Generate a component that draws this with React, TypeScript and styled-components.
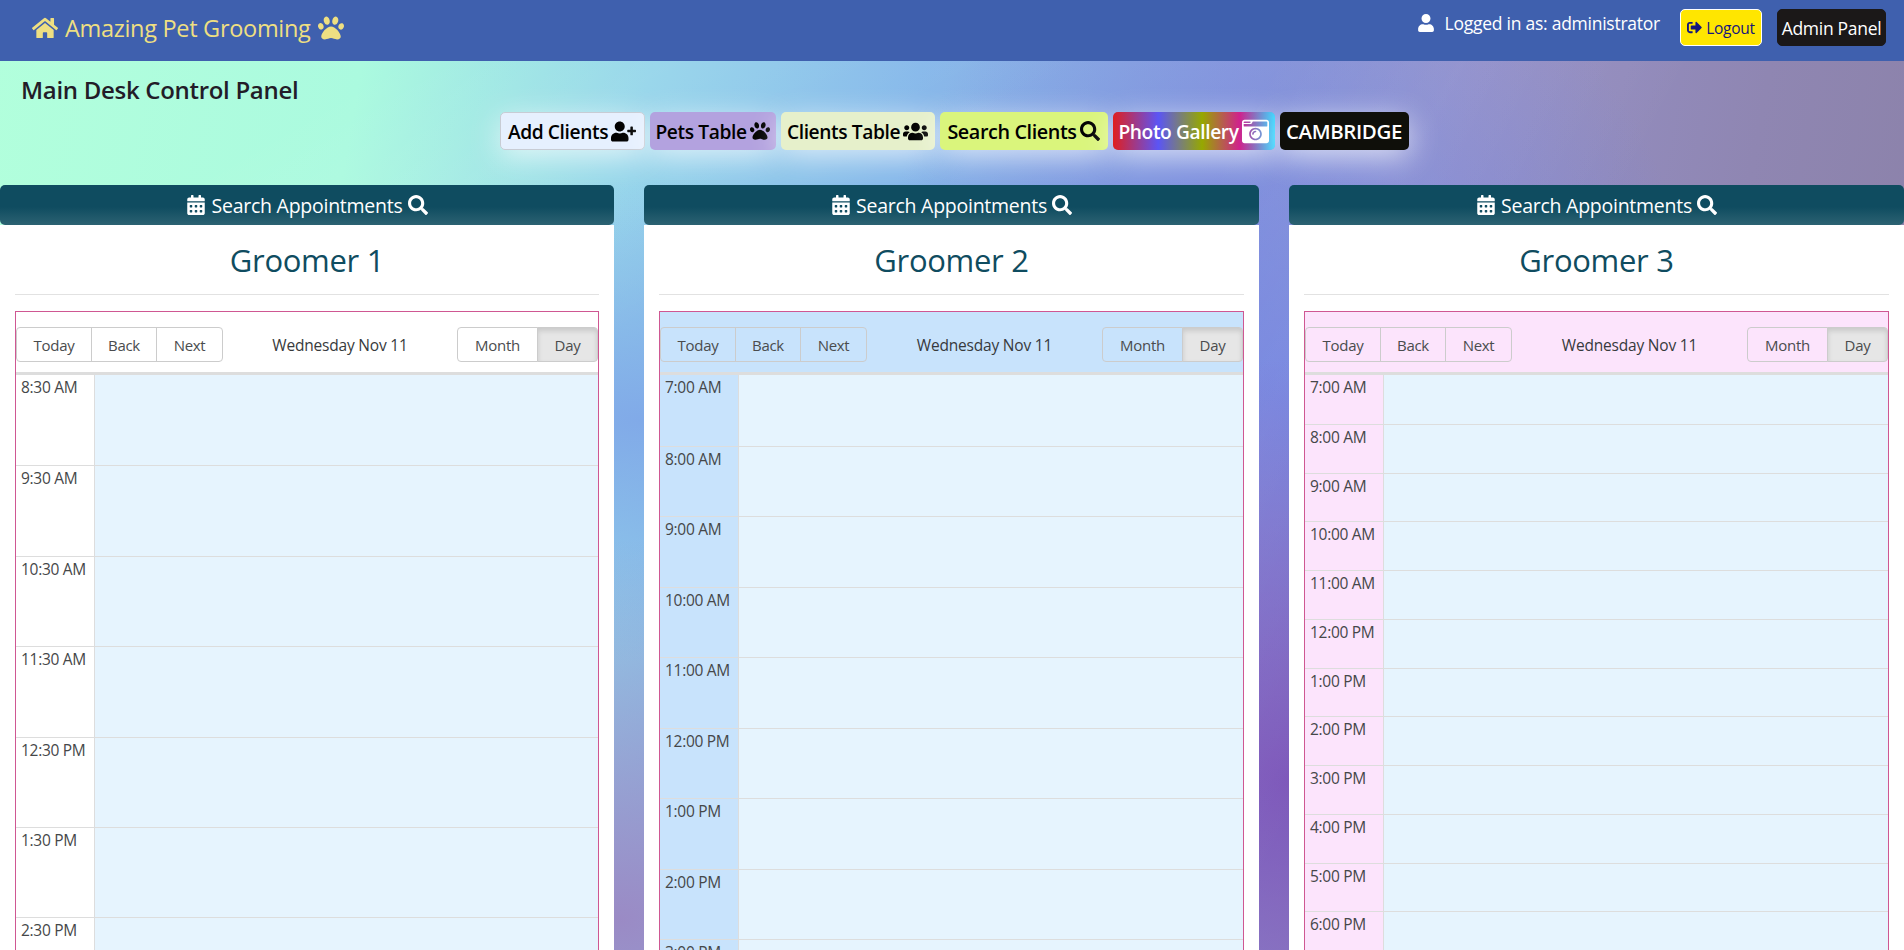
import React from 'react';
import styled, { createGlobalStyle } from 'styled-components';
import {
  FaCalendarAlt,
  FaCameraRetro,
  FaHome,
  FaPaw,
  FaSearch,
  FaSignOutAlt,
  FaUser,
  FaUserPlus,
  FaUsers,
} from 'react-icons/fa';

const GlobalStyle = createGlobalStyle`
  * {
    box-sizing: border-box;
  }

  html,
  body {
    margin: 0;
    height: 950px;
    overflow: hidden;
  }

  body {
    font-family: 'Open Sans', 'Liberation Sans', sans-serif;
    color: #373a3c;
  }
`;

const Page = styled.div`
  height: 950px;
  overflow: hidden;
  background:
    linear-gradient(118deg, rgba(255, 255, 255, 0) 54%, rgba(255, 255, 255, 0.06) 62%, rgba(255, 255, 255, 0) 72%),
    linear-gradient(150deg, rgba(255, 255, 255, 0) 14%, rgba(255, 255, 255, 0.07) 22%, rgba(255, 255, 255, 0) 34%),
    radial-gradient(ellipse 500px 420px at 1290px 780px, rgba(125, 85, 185, 0.95), rgba(125, 85, 185, 0) 100%),
    radial-gradient(ellipse 430px 500px at 1280px 400px, rgba(112, 130, 225, 0.9), rgba(112, 130, 225, 0) 100%),
    radial-gradient(ellipse 520px 380px at 620px 920px, rgba(155, 135, 195, 0.95), rgba(155, 135, 195, 0) 100%),
    radial-gradient(ellipse 500px 240px at 640px 420px, rgba(128, 168, 232, 0.95), rgba(128, 168, 232, 0) 100%),
    linear-gradient(100deg, #b2ffdc 0%, #abfadf 18%, #93d4ea 32%, #86b8ea 45%, #8e9fdc 60%, #9590c6 72%, #8f86b2 86%, #8a80a6 100%);
`;

const Navbar = styled.nav`
  height: 61px;
  background-color: #3f60ae;
  display: flex;
  align-items: flex-start;
  justify-content: space-between;
  padding: 9px 18px 0 32px;
`;

const Brand = styled.a`
  display: flex;
  align-items: center;
  gap: 7px;
  height: 37px;
  color: #eedf82;
  font-size: 23.5px;
  letter-spacing: -0.3px;
`;

const NavRight = styled.div`
  display: flex;
  align-items: flex-start;
`;

const LoggedIn = styled.span`
  display: flex;
  align-items: center;
  gap: 10px;
  height: 28px;
  color: #fff;
  font-size: 17.5px;
  letter-spacing: -0.25px;
  margin-right: 20px;
`;

const NavButton = styled.button<{ $variant: 'logout' | 'admin' }>`
  display: flex;
  align-items: center;
  justify-content: center;
  gap: 4px;
  height: 37px;
  padding: 0;
  font-family: inherit;
  border-radius: 5px;
  width: ${({ $variant }) => ($variant === 'logout' ? 82 : 109)}px;
  margin-left: ${({ $variant }) => ($variant === 'admin' ? 15 : 0)}px;
  font-size: ${({ $variant }) => ($variant === 'logout' ? 15.5 : 17.5)}px;
  letter-spacing: -0.3px;
  color: ${({ $variant }) => ($variant === 'logout' ? '#15157e' : '#fff')};
  background-color: ${({ $variant }) => ($variant === 'logout' ? '#ffe600' : '#1b1818')};
  border: 1px solid ${({ $variant }) => ($variant === 'logout' ? '#fff' : '#1b1818')};
`;

const ControlArea = styled.section`
  height: 124px;
  padding-top: 13px;
`;

const PanelHeading = styled.h1`
  margin: 0 0 7px 21px;
  font-size: 24px;
  line-height: 31px;
  font-weight: 600;
  color: #231c28;
  letter-spacing: -0.3px;
`;

const ActionRow = styled.div`
  display: flex;
  justify-content: center;
  gap: 5px;
  padding-left: 4px;
`;

const ActionButton = styled.button<{ $bg: string; $light?: boolean; $width: number; $border?: boolean; $size?: number }>`
  display: flex;
  align-items: center;
  justify-content: center;
  gap: 3px;
  height: 38px;
  width: ${({ $width }) => $width}px;
  padding: 0;
  border: 1px solid ${({ $border }) => ($border ? '#c8ccd4' : 'transparent')};
  border-radius: 5px;
  font-family: inherit;
  font-size: ${({ $size }) => $size ?? 19.2}px;
  font-weight: 600;
  letter-spacing: -0.4px;
  white-space: nowrap;
  color: ${({ $light }) => ($light ? '#fff' : '#000')};
  background: ${({ $bg }) => $bg};
  background-origin: border-box;
  box-shadow: 0 7px 30px rgba(255, 255, 255, 0.7);

  svg {
    flex: none;
  }
`;

const Columns = styled.div`
  display: grid;
  grid-template-columns: 614px 615px 615px;
  gap: 30px;
`;

const SearchBar = styled.div`
  height: 40px;
  border-radius: 5px;
  display: flex;
  align-items: center;
  justify-content: center;
  gap: 5px;
  color: #fff;
  font-size: 19.5px;
  letter-spacing: -0.25px;
  background: linear-gradient(to bottom, #0f4c60 0%, #0f4c60 55%, #2c6272 100%);

  svg {
    font-size: 20px;
  }
`;

const PanelBody = styled.div`
  background-color: #fff;
  padding: 0 15px;
  height: 730px;
`;

const GroomerTitle = styled.h3`
  margin: 0;
  height: 69px;
  display: flex;
  align-items: center;
  justify-content: center;
  color: #0f4c60;
  font-size: 31px;
  font-weight: 500;
  letter-spacing: -0.3px;
`;

const Divider = styled.hr`
  margin: 0 0 16px;
  border: 0;
  border-top: 1px solid #e2e2e2;
`;

const Calendar = styled.div<{ $bg: string }>`
  border: 1px solid #cf5792;
  background-color: ${({ $bg }) => $bg};
  padding-top: 15px;
  height: 700px;
  overflow: hidden;
`;

const Toolbar = styled.div`
  display: flex;
  align-items: center;
  justify-content: space-between;
  height: 35px;
  margin-bottom: 10px;
`;

const ButtonGroup = styled.div`
  display: flex;
`;

const ToolButton = styled.button<{ $width: number; $active?: boolean }>`
  width: ${({ $width }) => $width}px;
  height: 35px;
  padding: 0;
  font-family: inherit;
  font-size: 15px;
  letter-spacing: -0.3px;
  color: #4a4c4e;
  background-color: ${({ $active }) => ($active ? '#e6e6e6' : 'transparent')};
  border: 1px solid #ccc;
  margin-left: -1px;
  box-shadow: ${({ $active }) => ($active ? 'inset 0 3px 5px rgba(0, 0, 0, 0.125)' : 'none')};

  &:first-child {
    margin-left: 0;
    border-radius: 4px 0 0 4px;
  }

  &:last-child {
    border-radius: 0 4px 4px 0;
  }
`;

const ToolLabel = styled.span`
  font-size: 15.5px;
  letter-spacing: -0.2px;
  color: #373a3c;
`;

const TimeGrid = styled.div`
  border-top: 3px solid #ddd;
`;

const TimeRow = styled.div<{ $height: number }>`
  display: flex;
  height: ${({ $height }) => $height}px;
  border-top: 1px solid #ddd;

  &:first-child {
    border-top: 0;
  }
`;

const TimeLabel = styled.div`
  width: 79px;
  flex: none;
  padding: 2px 0 0 5px;
  font-size: 15.5px;
  line-height: 20px;
  letter-spacing: -0.3px;
  white-space: nowrap;
  color: #454749;
  border-right: 1px solid #ddd;
`;

const Slot = styled.div`
  flex: 1;
  background-color: #e6f4fe;
`;

const groomers = [
  {
    name: 'Groomer 1',
    bg: '#fff',
    rowHeight: 90.4,
    times: ['8:30 AM', '9:30 AM', '10:30 AM', '11:30 AM', '12:30 PM', '1:30 PM', '2:30 PM'],
  },
  {
    name: 'Groomer 2',
    bg: '#c8e3fc',
    rowHeight: 70.5,
    times: ['7:00 AM', '8:00 AM', '9:00 AM', '10:00 AM', '11:00 AM', '12:00 PM', '1:00 PM', '2:00 PM', '3:00 PM'],
  },
  {
    name: 'Groomer 3',
    bg: '#fce4fc',
    rowHeight: 48.75,
    times: [
      '7:00 AM',
      '8:00 AM',
      '9:00 AM',
      '10:00 AM',
      '11:00 AM',
      '12:00 PM',
      '1:00 PM',
      '2:00 PM',
      '3:00 PM',
      '4:00 PM',
      '5:00 PM',
      '6:00 PM',
    ],
  },
];

const App: React.FC = () => (
  <Page>
    <GlobalStyle />
    <Navbar>
      <Brand>
        <FaHome size={26} />
        Amazing Pet Grooming
        <FaPaw size={26} />
      </Brand>
      <NavRight>
        <LoggedIn>
          <FaUser size={18} />
          Logged in as: administrator
        </LoggedIn>
        <NavButton $variant="logout">
          <FaSignOutAlt size={15} />
          Logout
        </NavButton>
        <NavButton $variant="admin">Admin Panel</NavButton>
      </NavRight>
    </Navbar>
    <ControlArea>
      <PanelHeading>Main Desk Control Panel</PanelHeading>
      <ActionRow>
        <ActionButton $bg="#e6f0fe" $width={145} $border>
          Add Clients <FaUserPlus size={25} />
        </ActionButton>
        <ActionButton $bg="#b3a2df" $width={126}>
          Pets Table <FaPaw size={20} />
        </ActionButton>
        <ActionButton $bg="#e6f0cb" $width={154}>
          Clients Table <FaUsers size={25} />
        </ActionButton>
        <ActionButton $bg="#daf57c" $width={168} $size={19.8}>
          Search Clients <FaSearch size={20} />
        </ActionButton>
        <ActionButton
          $bg="linear-gradient(to right, #e01f1f 0%, #5b55f5 28%, #96a800 55%, #d0218c 78%, #2fd5ff 100%)"
          $width={162}
          $light
        >
          Photo Gallery <FaCameraRetro size={27} />
        </ActionButton>
        <ActionButton $bg="#0f0f0a" $width={129} $light $size={20.5}>
          CAMBRIDGE
        </ActionButton>
      </ActionRow>
    </ControlArea>
    <Columns>
      {groomers.map((groomer) => (
        <div key={groomer.name}>
          <SearchBar>
            <FaCalendarAlt />
            Search Appointments
            <FaSearch />
          </SearchBar>
          <PanelBody>
            <GroomerTitle>{groomer.name}</GroomerTitle>
            <Divider />
            <Calendar $bg={groomer.bg}>
              <Toolbar>
                <ButtonGroup>
                  <ToolButton $width={76}>Today</ToolButton>
                  <ToolButton $width={66}>Back</ToolButton>
                  <ToolButton $width={67}>Next</ToolButton>
                </ButtonGroup>
                <ToolLabel>Wednesday Nov 11</ToolLabel>
                <ButtonGroup>
                  <ToolButton $width={81}>Month</ToolButton>
                  <ToolButton $width={61} $active>
                    Day
                  </ToolButton>
                </ButtonGroup>
              </Toolbar>
              <TimeGrid>
                {groomer.times.map((time) => (
                  <TimeRow key={time} $height={groomer.rowHeight}>
                    <TimeLabel>{time}</TimeLabel>
                    <Slot />
                  </TimeRow>
                ))}
              </TimeGrid>
            </Calendar>
          </PanelBody>
        </div>
      ))}
    </Columns>
  </Page>
);

export default App;
